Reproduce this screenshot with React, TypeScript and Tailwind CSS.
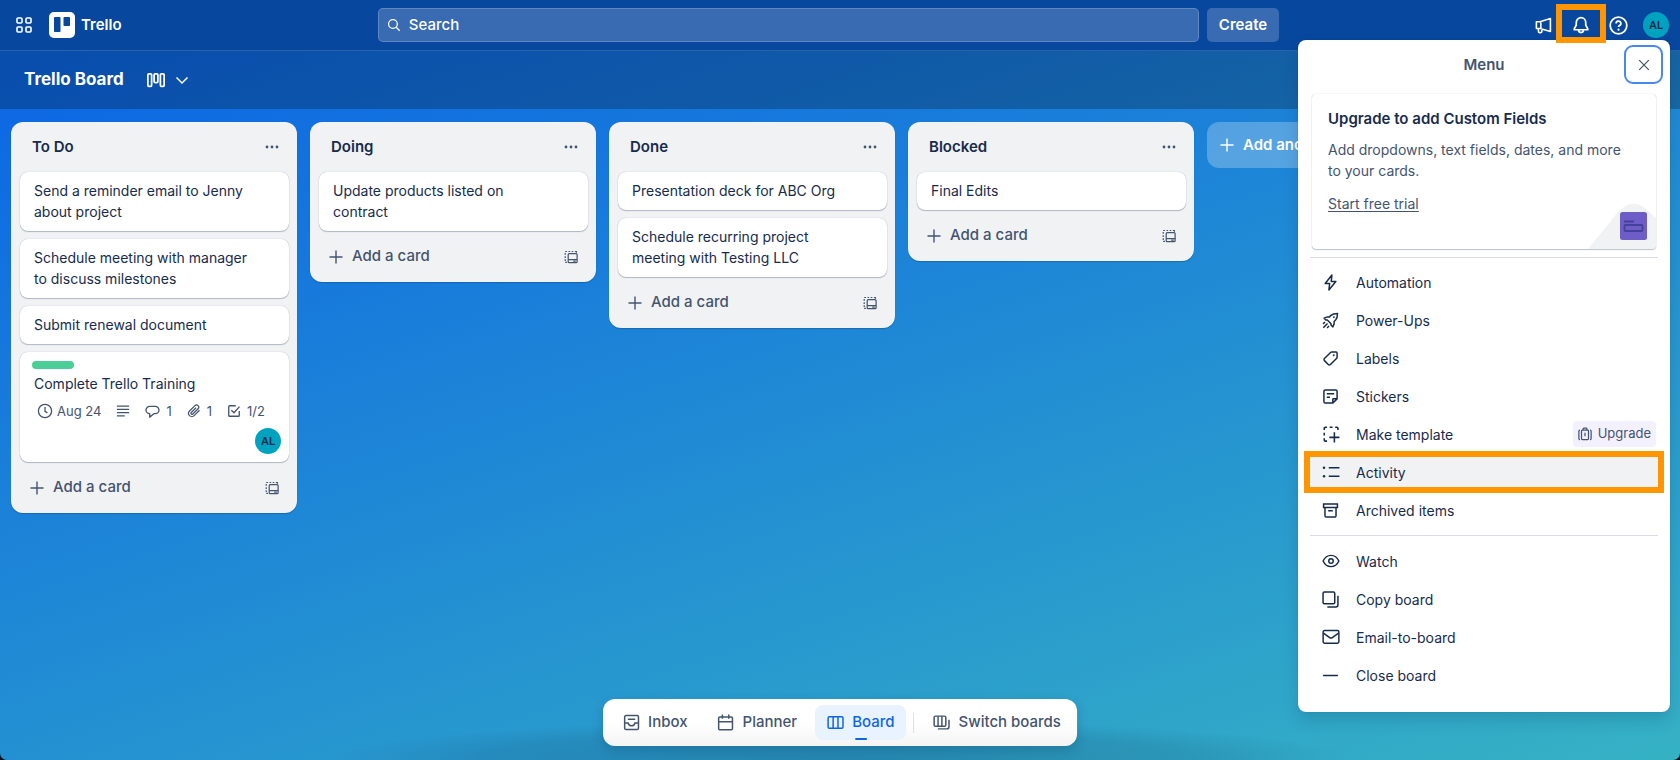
import React from "react";

type P = { children: React.ReactNode; size?: string; w?: number };
function Svg({ children, size = "size-[17px]", w = 1.4 }: P) {
  return (
    <svg viewBox="0 0 16 16" className={`${size} shrink-0`} fill="none" stroke="currentColor" strokeWidth={w} aria-hidden="true">
      {children}
    </svg>
  );
}

const Dots = () => (
  <svg viewBox="0 0 16 16" className="size-4" fill="currentColor" aria-hidden="true">
    <circle cx="3" cy="8" r="1.4" /><circle cx="8" cy="8" r="1.4" /><circle cx="13" cy="8" r="1.4" />
  </svg>
);

const TemplateIcon = () => (
  <Svg size="size-[14px]" w={1.4}>
    <rect x="4.8" y="4.2" width="10.2" height="10.3" rx="1.2" />
    <path d="M4.8 11H15" />
    <path d="M10.5 12.7h3" />
    <path d="M1.4 14.2h2M1.4 12.5v-1.8M1.4 9V7.2M1.4 5.5V3.5M1.4 1.7h2M5.2 1.7H7M8.8 1.7h1.8M12.4 1.7h1.8v1.3" />
  </Svg>
);

const Plus = () => <Svg size="size-4" w={1.4}><path d="M8 1.5v13M1.5 8h13" /></Svg>;

function Avatar() {
  return (
    <span className="flex size-[26px] shrink-0 items-center justify-center rounded-full bg-[#00a3bf] text-[11px] font-semibold text-[#172b4d]">
      AL
    </span>
  );
}

function Card({ children }: { children: React.ReactNode }) {
  return (
    <article className="rounded-lg bg-white pt-2 pr-7 pb-[9px] pl-[14px] text-[14px] leading-[21px] shadow-[0_1px_1px_#091e4240,0_0_1px_#091e424f]">
      {children}
    </article>
  );
}

function Training() {
  return (
    <article className="flex h-[110px] flex-col rounded-lg bg-white px-3 pt-[9px] pb-2 shadow-[0_1px_1px_#091e4240,0_0_1px_#091e424f]">
      <span className="h-2 w-[42px] rounded bg-[#4bce97]" />
      <h3 className="mt-1 pl-0.5 text-[14px] leading-[21px]">Complete Trello Training</h3>
      <div className="mt-[9px] flex items-center pl-[5px] text-[13px] leading-4 text-[#44546f]">
        <span className="flex items-center gap-1">
          <Svg size="size-4" w={1.3}><circle cx="8" cy="8" r="6.6" /><path d="M8 4v4.3l2.4 1.6" /></Svg>
          Aug 24
        </span>
        <span className="ml-[15px]">
          <Svg size="size-[14px]" w={1.5}><path d="M1 2.5h14M1 6.2h14M1 9.8h14M1 13.5h9" /></Svg>
        </span>
        <span className="ml-[15px] flex items-center gap-1.5">
          <Svg size="size-[15px]" w={1.4}><path d="M5 2.5h6a3.9 3.9 0 0 1 0 7.8H9.5L5 14v-3.7a3.9 3.9 0 0 1 0-7.8z" strokeLinejoin="round" /></Svg>1
        </span>
        <span className="ml-[15px] flex items-center gap-1.5">
          <Svg size="size-[14px]" w={1.4}><path d="M14.3 7.2 8.2 13.3a3.7 3.7 0 0 1-5.3-5.3l6.2-6.1a2.5 2.5 0 0 1 3.6 3.5l-6 6a1.2 1.2 0 0 1-1.8-1.7l5.4-5.4" /></Svg>1
        </span>
        <span className="ml-[15px] flex items-center gap-1.5">
          <Svg size="size-[14px]" w={1.5}><path d="M10 2H3a1 1 0 0 0-1 1v10a1 1 0 0 0 1 1h10a1 1 0 0 0 1-1V8M5 7.2 8 10l6.3-7" /></Svg>1/2
        </span>
      </div>
      <div className="-mr-1 mt-auto flex justify-end"><Avatar /></div>
    </article>
  );
}

function List({ title, children }: { title: string; children: React.ReactNode }) {
  return (
    <section className="w-[286px] shrink-0 rounded-xl bg-[#f1f2f4] pr-2 pl-[9px] text-[#172b4d] shadow-[0_1px_1px_#091e4240]">
      <header className="flex h-[50px] items-center justify-between pr-[9px] pl-3">
        <h2 className="text-[15px] font-semibold">{title}</h2>
        <button aria-label={`${title} list actions`} className="text-[#44546f]"><Dots /></button>
      </header>
      <div className="flex flex-col gap-2">{children}</div>
      <footer className="flex h-[51px] items-center justify-between pr-2.5 pl-[9px] text-[#44546f]">
        <button className="flex items-center gap-2 text-[15px] font-medium"><Plus />Add a card</button>
        <button aria-label="Create from template"><TemplateIcon /></button>
      </footer>
    </section>
  );
}

const icons = {
  automation: <Svg><path d="M9.3 1 3 9h4.2L6.5 15 13 7H8.7z" strokeLinejoin="round" /></Svg>,
  powerups: <Svg><path d="M2 5.8 5 4.6h2l1.4-1.4C10 1.8 12 1.4 14.6 1.4c0 2.6-.4 4.6-1.8 6.2L11.4 9v2.2L10.2 14 8.5 12.3V11L5 7.5H3.6zM1.2 14.8l4-4M1 11.2l1.8-1.8M4.8 15l1.8-1.8" strokeLinejoin="round" /><circle cx="11.2" cy="4.8" r=".9" fill="currentColor" stroke="none" /></Svg>,
  labels: <Svg><path d="M9 1.8h4.2a1 1 0 0 1 1 1V7a1 1 0 0 1-.3.7l-6 6a1.4 1.4 0 0 1-2 0L2.3 10a1.4 1.4 0 0 1 0-2l6-5.9A1 1 0 0 1 9 1.8z" strokeLinejoin="round" /><circle cx="11" cy="5" r=".9" fill="currentColor" stroke="none" /></Svg>,
  stickers: <Svg><path d="M10.2 14.2H3a1.2 1.2 0 0 1-1.2-1.2V3A1.2 1.2 0 0 1 3 1.8h10A1.2 1.2 0 0 1 14.2 3v7.2L10.2 14.2zV10.8a.6.6 0 0 1 .6-.6h3.4M4.5 5.5h7M4.5 8.8h3" /></Svg>,
  template: <Svg size="size-[18px]"><path d="M2 4.5V3a1 1 0 0 1 1-1h1.5M6.8 2h2.6M11.7 2h1.5a1 1 0 0 1 1 1v1.5M2 6.8v2.6M2 11.8v1.5a1 1 0 0 0 1 1h1.5M11 6.500v9M6.500 11h9" /></Svg>,
  activity: <Svg size="size-[18px]"><path d="M6 4.2h9.5M6 11.8h9.5" /><circle cx="1.8" cy="4.2" r="1.1" fill="currentColor" stroke="none" /><circle cx="1.8" cy="11.8" r="1.1" fill="currentColor" stroke="none" /></Svg>,
  archive: <Svg><path d="M1.5 1.8h13v3.4h-13zM2.8 5.2V13a1.2 1.2 0 0 0 1.2 1.2h8a1.2 1.2 0 0 0 1.2-1.2V5.2M5.8 8.2h4.4" /></Svg>,
  watch: <Svg size="size-[18px]" w={1.3}><path d="M1 8c1.5-3.3 4-5 7-5s5.5 1.7 7 5c-1.5 3.3-4 5-7 5S2.5 11.3 1 8z" /><circle cx="8" cy="8" r="2" /></Svg>,
  copy: <Svg><rect x="1" y="1" width="11" height="11" rx="1.2" /><path d="M15 4.5V13a2 2 0 0 1-2 2H5" /></Svg>,
  email: <Svg size="size-[18px]" w={1.3}><rect x="1" y="2.3" width="14" height="11.2" rx="1.2" /><path d="m1.3 4.5 5.5 4a2 2 0 0 0 2.4 0l5.5-4" /></Svg>,
  close: <Svg><path d="M1 8h14" /></Svg>,
};

function Item({ icon, label, children, active = "" }: { icon: React.ReactNode; label: string; children?: React.ReactNode; active?: string }) {
  return (
    <li className="relative">
      <button className={`flex h-[38px] w-full items-center text-left text-[14px] ${active}`}>
        <span className="flex w-[46px] items-center pl-3">{icon}</span>
        {label}
        {children}
      </button>
    </li>
  );
}

function Menu() {
  return (
    <aside className="absolute top-10 right-2.5 w-[372px] rounded-lg bg-white px-3 pb-[18px] text-[#172b4d] shadow-[0_8px_16px_#091e4226,0_0_1px_#091e424f]">
      <header className="relative flex h-[54px] items-center justify-center pb-1">
        <h2 className="text-[15px] font-semibold text-[#44546f]">Menu</h2>
        <button aria-label="Close menu" className="absolute top-[5px] right-[-5px] flex size-[39px] items-center justify-center rounded-[9px] border-2 border-[#4688ec] text-[#44546f]">
          <Svg size="size-[14px]" w={1.4}><path d="m2.5 2.5 11 11M13.5 2.5l-11 11" /></Svg>
        </button>
      </header>
      <section className="relative mx-0.5 flex h-[155px] flex-col items-start overflow-hidden rounded-sm pt-[14px] pl-4 shadow-[0_1px_1px_#091e4240,0_0_1px_#091e424f]">
        <h3 className="text-[15px] leading-[21px] font-semibold">Upgrade to add Custom Fields</h3>
        <p className="mt-2.5 pr-6 text-[14px] leading-[21px] text-[#44546f]">Add dropdowns, text fields, dates, and more to your cards.</p>
        <a href="#trial" className="mt-3 text-[14px] leading-[21px] text-[#44546f] underline underline-offset-2">Start free trial</a>
        <svg viewBox="0 0 68 46" className="absolute right-0 bottom-0 h-[46px] w-[68px]" aria-hidden="true">
          <path d="M0 46 30 9Q44-6 58 6L68 15V46z" fill="#f1f2f4" />
          <rect x="32" y="9" width="27" height="28" rx="2.5" fill="#6e5dc6" />
          <path d="M36 18.5h10" stroke="#44419a" strokeWidth="1.8" />
          <rect x="36.5" y="22" width="18" height="6" rx="1" fill="none" stroke="#44419a" strokeWidth="1.8" />
        </svg>
      </section>
      <hr className="mt-2 mb-[5px] border-[#d9dce2]" />
      <ul>
        <Item icon={icons.automation} label="Automation" />
        <Item icon={icons.powerups} label="Power-Ups" />
        <Item icon={icons.labels} label="Labels" />
        <Item icon={icons.stickers} label="Stickers" />
        <Item icon={icons.template} label="Make template">
          <span className="mr-0.5 ml-auto flex h-[26px] items-center gap-1.5 rounded-sm bg-[#f3f0ff] px-[5px] text-[13px] text-[#44546f]">
            <Svg size="size-[14px]" w={1.4}><rect x="4" y="3.5" width="8" height="11" rx="1" /><path d="M5.8 3.5V2.3a1 1 0 0 1 1-1h2.4a1 1 0 0 1 1 1v1.2M2.3 3.5A1.3 1.3 0 0 0 1 4.8v8.4a1.3 1.3 0 0 0 1.3 1.3M13.7 3.5A1.3 1.3 0 0 1 15 4.8v8.4a1.3 1.3 0 0 1-1.3 1.3M8 6.5v4" /></Svg>
            Upgrade
          </span>
        </Item>
        <Item icon={icons.activity} label="Activity" active="bg-[#f1f2f4]">
          <span className="pointer-events-none absolute inset-x-[-6px] inset-y-[-2px] border-[6px] border-[#ff9500]" />
        </Item>
        <Item icon={icons.archive} label="Archived items" />
      </ul>
      <hr className="my-1.5 border-[#d9dce2]" />
      <ul>
        <Item icon={icons.watch} label="Watch" />
        <Item icon={icons.copy} label="Copy board" />
        <Item icon={icons.email} label="Email-to-board" />
        <Item icon={icons.close} label="Close board" />
      </ul>
    </aside>
  );
}

export default function App() {
  return (
    <div className="bg-[#0b1526]">
      <div className="relative flex min-h-screen flex-col overflow-hidden rounded-b-[7px] bg-linear-[162deg,#0c66e4_5%,#37b4c3_103%] font-[Inter,'Liberation_Sans',sans-serif] text-white">
        <header className="flex h-[51px] items-center border-b border-white/15 bg-[#07479e] pr-[11px] pl-4">
          <div className="flex flex-1 items-center">
            <button aria-label="Switch apps">
              <Svg size="size-4" w={1.6}><rect x="1" y="1" width="5" height="5" rx="1" /><rect x="10" y="1" width="5" height="5" rx="1" /><rect x="1" y="10" width="5" height="5" rx="1" /><rect x="10" y="10" width="5" height="5" rx="1" /></Svg>
            </button>
            <a href="#home" className="ml-[17px] flex items-center gap-1.5 text-[15px] font-semibold">
              <svg viewBox="0 0 26 26" className="size-[26px]" aria-hidden="true">
                <rect width="26" height="26" rx="5" fill="#fff" />
                <rect x="5" y="5" width="6.5" height="15" rx=".8" fill="#07479e" />
                <rect x="14.5" y="5" width="6.5" height="9" rx=".8" fill="#07479e" />
              </svg>
              Trello
            </a>
          </div>
          <label className="flex h-[34px] w-[821px] items-center gap-2 rounded-[5px] border border-white/20 bg-white/20 px-2">
            <Svg size="size-[14px]" w={1.5}><circle cx="6.8" cy="6.8" r="5" /><path d="m10.5 10.5 4 4" /></Svg>
            <input type="search" aria-label="Search" placeholder="Search" className="min-w-0 flex-1 bg-transparent text-[15px] text-white outline-none placeholder:font-medium placeholder:text-white" />
          </label>
          <button className="ml-2 h-[34px] rounded-[5px] bg-white/20 px-3 text-[15px] font-semibold">Create</button>
          <div className="ml-7 flex flex-1 items-center justify-end">
            <button aria-label="News">
              <Svg size="size-[17px]" w={1.5}><path d="M1.300 4.500h3.400L14.500 1.500v12.200l-9.800-2.900H1.300zM5.500 4.500v6.300M3.200 10.800v2.500a1.400 1.400 0 0 0 1.400 1.400h.5a1.400 1.400 0 0 0 1.400-1.400v-1.900" strokeLinejoin="round" /></Svg>
            </button>
            <button aria-label="Notifications" className="relative z-10 ml-5">
              <Svg size="size-[18px]" w={1.5}><path d="M8 1.5A4.2 4.2 0 0 0 3.8 5.7V8L2 11.500v.7h12v-.7L12.200 8V5.700A4.200 4.200 0 0 0 8 1.500zM5.800 12.500a2.200 2.200 0 0 0 4.400 0" strokeLinejoin="round" /></Svg>
              <span className="pointer-events-none absolute -inset-x-4 -top-3 -bottom-[9px] border-[6px] border-[#ff9500]" />
            </button>
            <button aria-label="Help" className="ml-[19px]">
              <Svg size="size-[19px]" w={1.5}><circle cx="8" cy="8" r="7" /><path d="M6 6.300A2 2 0 1 1 8.800 8.100C8.200 8.400 8 8.700 8 9.300" /><circle cx="8" cy="11.500" r=".9" fill="currentColor" stroke="none" /></Svg>
            </button>
            <button aria-label="Account" className="ml-[15px]"><Avatar /></button>
          </div>
        </header>

        <div className="flex h-[58px] items-center bg-black/24 px-6">
          <h1 className="text-[17px] font-bold">Trello Board</h1>
          <button aria-label="Views" className="ml-[22px] flex items-center gap-2">
            <Svg size="size-5" w={1.4}><rect x="1.500" y="3" width="3" height="10" rx=".8" /><rect x="6.500" y="3" width="3" height="7" rx=".8" /><rect x="11.500" y="3" width="3" height="10" rx=".8" /></Svg>
            <Svg size="size-4" w={1.5}><path d="m2.500 5.500 5.500 5.500 5.500-5.500" /></Svg>
          </button>
        </div>

        <main className="flex flex-1 items-start gap-[13px] px-[11px] pt-[13px]">
          <List title="To Do">
            <Card>Send a reminder email to Jenny about project</Card>
            <Card>Schedule meeting with manager to discuss milestones</Card>
            <Card>Submit renewal document</Card>
            <Training />
          </List>
          <List title="Doing"><Card>Update products listed on contract</Card></List>
          <List title="Done">
            <Card>Presentation deck for ABC Org</Card>
            <Card>Schedule recurring project meeting with Testing LLC</Card>
          </List>
          <List title="Blocked"><Card>Final Edits</Card></List>
          <button className="flex h-[46px] w-[286px] shrink-0 items-center gap-2 rounded-xl bg-white/25 px-3 text-[15px] font-semibold">
            <Plus />Add another list
          </button>
        </main>

        <div className="pointer-events-none absolute inset-x-0 bottom-0 mx-auto h-10 w-3/5 bg-[radial-gradient(ellipse_at_bottom,#091e4233_0%,#091e421f_50%,transparent_72%)]" />

        <Menu />

        <nav className="absolute bottom-[14px] left-1/2 flex h-[47px] -translate-x-1/2 items-center rounded-xl bg-linear-to-b from-white from-50% to-[#f4f4f5] px-2 text-[15px] font-medium text-[#44546f] shadow-[0_4px_12px_#091e4233]">
          <button className="flex h-[35px] items-center gap-2 px-3">
            <Svg><rect x="1.5" y="1.5" width="13" height="13" rx="1.2" /><path d="M4.5 5h7M1.5 8.5h3.3c.4 1.8 1.5 2.6 3.2 2.6s2.8-.8 3.2-2.6h3.3" /></Svg>Inbox
          </button>
          <button className="ml-1.5 flex h-[35px] items-center gap-2 px-3">
            <Svg><rect x="1.5" y="2.8" width="13" height="12" rx="1.2" /><path d="M1.5 7.2h13M5 .5v4M11 .5v4" /></Svg>Planner
          </button>
          <button className="relative ml-1.5 flex h-[35px] items-center gap-2 rounded-lg bg-[#e9f2ff] px-3 text-[#0c66e4]">
            <Svg><rect x="1" y="2.5" width="14" height="11" rx="1.2" /><path d="M5.7 2.5v11M10.3 2.5v11" /></Svg>Board
            <span className="absolute bottom-0 left-1/2 h-0.5 w-3 -translate-x-1/2 rounded-full bg-[#0c66e4]" />
          </button>
          <span className="mx-[7px] h-5 w-px bg-[#dcdfe4]" />
          <button className="flex h-[35px] items-center gap-2 pr-2 pl-3">
            <Svg><rect x="1" y="2" width="11" height="9.5" rx="1.2" /><path d="M4.7 2v9.5M8.3 2v9.5M15 5.5V12a2 2 0 0 1-2 2H4.5" /></Svg>Switch boards
          </button>
        </nav>
      </div>
    </div>
  );
}
